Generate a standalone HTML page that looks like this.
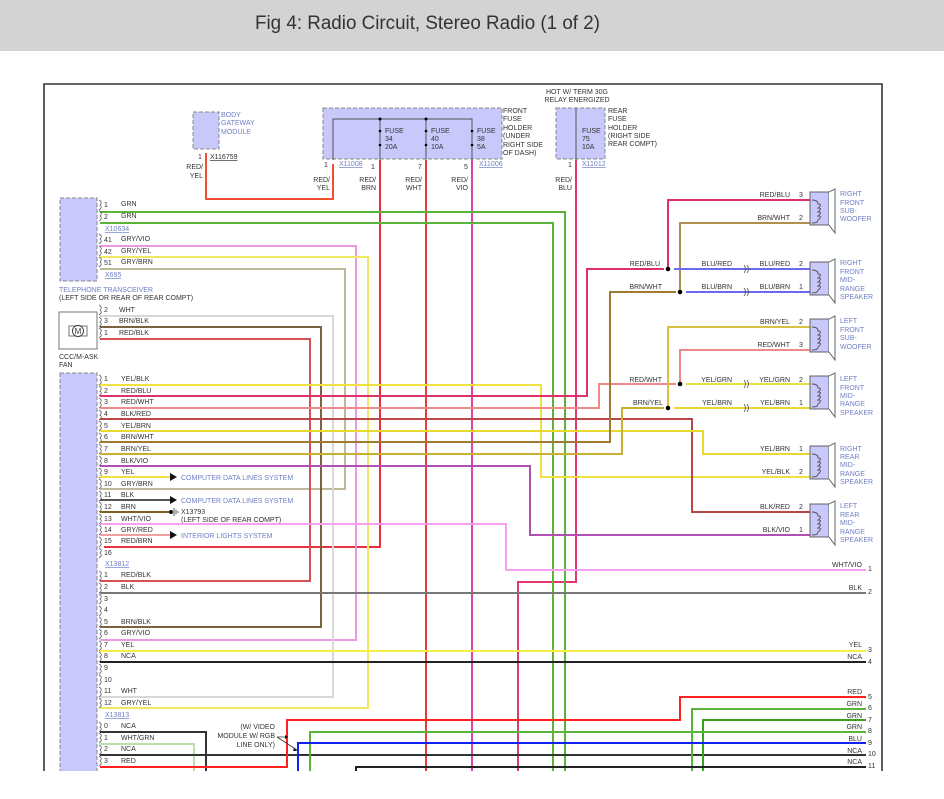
<!DOCTYPE html>
<html><head><meta charset="utf-8"><style>
html,body{margin:0;padding:0;background:#fff;width:944px;height:799px;overflow:hidden}
svg{display:block}
text{font-family:"Liberation Sans",sans-serif;font-size:7px;fill:#333}
.b{fill:#6f7fc4}
.u{fill:#6f7fc4;text-decoration:underline}
.w{fill:none;stroke-width:2}
.c{fill:none;stroke:#666;stroke-width:0.8}
</style></head><body>
<svg width="944" height="799" viewBox="0 0 944 799" xmlns="http://www.w3.org/2000/svg">
<rect x="0" y="0" width="944" height="51" fill="#d3d3d3"/>
<text x="255" y="29" style="font-size:19px;fill:#333" textLength="345" lengthAdjust="spacingAndGlyphs">Fig 4: Radio Circuit, Stereo Radio (1 of 2)</text>
<path d="M44,771 V84 H882 V771" fill="none" stroke="#333" stroke-width="1.6"/>

<!-- Body gateway -->
<rect x="193" y="112" width="26" height="37" fill="#c8c8fa" stroke="#888" stroke-dasharray="4,2"/>
<text class="b" x="221" y="117">BODY</text><text class="b" x="221" y="125">GATEWAY</text><text class="b" x="221" y="134">MODULE</text>
<text x="198" y="159">1</text><text class="u" x="210" y="159" style="fill:#333">X116759</text>
<text x="203" y="169" text-anchor="end">RED/</text><text x="203" y="178" text-anchor="end">YEL</text>
<polyline class="w" stroke="#f05030" points="206,153 206,199 333,199 333,164"/>

<!-- Front fuse holder -->
<rect x="323" y="108" width="179" height="51" fill="#c8c8fa" stroke="#888" stroke-dasharray="4,2"/>
<polyline fill="none" stroke="#555" stroke-width="1" points="333,160 333,119 472,119 472,160"/>
<line x1="380" y1="119" x2="380" y2="160" stroke="#555"/><line x1="426" y1="119" x2="426" y2="160" stroke="#555"/>
<g fill="#000"><circle cx="380" cy="119" r="1.5"/><circle cx="426" cy="119" r="1.5"/><circle cx="380" cy="131" r="1.3"/><circle cx="380" cy="145" r="1.3"/><circle cx="426" cy="131" r="1.3"/><circle cx="426" cy="145" r="1.3"/><circle cx="472" cy="131" r="1.3"/><circle cx="472" cy="145" r="1.3"/><circle cx="576" cy="131" r="1.3"/><circle cx="576" cy="145" r="1.3"/></g>
<text x="385" y="133">FUSE</text><text x="385" y="141">34</text><text x="385" y="149">20A</text>
<text x="431" y="133">FUSE</text><text x="431" y="141">40</text><text x="431" y="149">10A</text>
<text x="477" y="133">FUSE</text><text x="477" y="141">38</text><text x="477" y="149">5A</text>
<text x="503" y="113">FRONT</text><text x="503" y="121">FUSE</text><text x="503" y="130">HOLDER</text><text x="503" y="138">(UNDER</text><text x="503" y="147">RIGHT SIDE</text><text x="503" y="155">OF DASH)</text>
<text x="324" y="167">1</text><text class="u" x="339" y="166">X11008</text>
<text x="371" y="169">1</text><text x="418" y="169">7</text><text x="464" y="169">5</text><text class="u" x="479" y="166">X11006</text>
<text x="330" y="182" text-anchor="end">RED/</text><text x="330" y="190" text-anchor="end">YEL</text>
<text x="376" y="182" text-anchor="end">RED/</text><text x="376" y="190" text-anchor="end">BRN</text>
<text x="422" y="182" text-anchor="end">RED/</text><text x="422" y="190" text-anchor="end">WHT</text>
<text x="468" y="182" text-anchor="end">RED/</text><text x="468" y="190" text-anchor="end">VIO</text>

<!-- Rear fuse holder -->
<text x="577" y="94" text-anchor="middle">HOT W/ TERM 30G</text><text x="577" y="102" text-anchor="middle">RELAY ENERGIZED</text>
<rect x="556" y="108" width="49" height="51" fill="#c8c8fa" stroke="#888" stroke-dasharray="4,2"/>
<line x1="576" y1="108" x2="576" y2="160" stroke="#555"/>
<text x="582" y="133">FUSE</text><text x="582" y="141">75</text><text x="582" y="149">10A</text>
<text x="608" y="113">REAR</text><text x="608" y="121">FUSE</text><text x="608" y="130">HOLDER</text><text x="608" y="138">(RIGHT SIDE</text><text x="608" y="146">REAR COMPT)</text>
<text x="568" y="167">1</text><text class="u" x="582" y="166">X11012</text>
<text x="572" y="182" text-anchor="end">RED/</text><text x="572" y="190" text-anchor="end">BLU</text>

<!-- vertical feeds -->
<polyline class="w" stroke="#e83040" points="380,160 380,547 104,547"/>
<line class="w" stroke="#e83a3a" stroke-width="1.5" x1="426" y1="160" x2="426" y2="771"/>
<line class="w" stroke="#e040b0" x1="472" y1="160" x2="472" y2="771"/>
<polyline class="w" stroke="#e03868" points="576,160 576,582 518,582 518,771"/>

<!-- Telephone transceiver -->
<rect x="60" y="198" width="37" height="83" fill="#c8c8fa" stroke="#888" stroke-dasharray="4,2"/>
<text x="104" y="207">1</text><text x="121" y="206">GRN</text>
<text x="104" y="219">2</text><text x="121" y="218">GRN</text>
<text class="u" x="105" y="231">X10634</text>
<text x="104" y="242">41</text><text x="121" y="241">GRY/VIO</text>
<text x="104" y="254">42</text><text x="121" y="253">GRY/YEL</text>
<text x="104" y="265">51</text><text x="121" y="264">GRY/BRN</text>
<text class="u" x="105" y="277">X695</text>
<text class="b" x="59" y="292">TELEPHONE TRANSCEIVER</text><text x="59" y="300">(LEFT SIDE OR REAR OF REAR COMPT)</text>
<polyline class="w" stroke="#5ab43c" points="100,212 565,212 565,771"/>
<polyline class="w" stroke="#5ab43c" points="100,223 553,223 553,771"/>
<polyline class="w" stroke="#e89ae0" stroke-width="1.6" points="100,246 356,246 356,640 100,640"/>
<polyline class="w" stroke="#f0e860" stroke-width="1.6" points="100,257 368,257 368,708 100,708"/>
<polyline class="w" stroke="#bfb79a" points="100,269 345,269 345,489 100,489"/>

<!-- Fan -->
<rect x="59" y="312" width="38" height="37" fill="#fff" stroke="#777"/>
<rect x="69" y="326" width="18" height="10" fill="none" stroke="#555" stroke-width="0.8"/>
<circle cx="78" cy="331" r="5.5" fill="#fff" stroke="#333" stroke-width="0.9"/>
<text x="78" y="334" text-anchor="middle" style="font-size:8px">M</text>
<text x="59" y="359">CCC/M-ASK</text><text x="59" y="367">FAN</text>
<text x="104" y="312">2</text><text x="119" y="312">WHT</text>
<text x="104" y="323">3</text><text x="119" y="323">BRN/BLK</text>
<text x="104" y="335">1</text><text x="119" y="335">RED/BLK</text>
<polyline class="w" stroke="#d8d8d8" points="100,316 333,316 333,697 100,697"/>
<polyline class="w" stroke="#7a6440" points="100,327 321,327 321,627 100,627"/>
<polyline class="w" stroke="#d85050" points="100,339 310,339 310,581 100,581"/>

<!-- Radio module -->
<rect x="60" y="373" width="37" height="430" fill="#c8c8fa" stroke="#888" stroke-dasharray="4,2"/>
<g>
<text x="104" y="381">1</text><text x="121" y="381">YEL/BLK</text>
<text x="104" y="393">2</text><text x="121" y="393">RED/BLU</text>
<text x="104" y="404">3</text><text x="121" y="404">RED/WHT</text>
<text x="104" y="416">4</text><text x="121" y="416">BLK/RED</text>
<text x="104" y="428">5</text><text x="121" y="428">YEL/BRN</text>
<text x="104" y="439">6</text><text x="121" y="439">BRN/WHT</text>
<text x="104" y="451">7</text><text x="121" y="451">BRN/YEL</text>
<text x="104" y="463">8</text><text x="121" y="463">BLK/VIO</text>
<text x="104" y="474">9</text><text x="121" y="474">YEL</text>
<text x="104" y="486">10</text><text x="121" y="486">GRY/BRN</text>
<text x="104" y="497">11</text><text x="121" y="497">BLK</text>
<text x="104" y="509">12</text><text x="121" y="509">BRN</text>
<text x="104" y="521">13</text><text x="121" y="521">WHT/VIO</text>
<text x="104" y="532">14</text><text x="121" y="532">GRY/RED</text>
<text x="104" y="543">15</text><text x="121" y="543">RED/BRN</text>
<text x="104" y="555">16</text>
<text class="u" x="105" y="566">X13812</text>
<text x="104" y="577">1</text><text x="121" y="577">RED/BLK</text>
<text x="104" y="589">2</text><text x="121" y="589">BLK</text>
<text x="104" y="601">3</text><text x="104" y="612">4</text>
<text x="104" y="624">5</text><text x="121" y="624">BRN/BLK</text>
<text x="104" y="635">6</text><text x="121" y="635">GRY/VIO</text>
<text x="104" y="647">7</text><text x="121" y="647">YEL</text>
<text x="104" y="658">8</text><text x="121" y="658">NCA</text>
<text x="104" y="670">9</text><text x="104" y="682">10</text>
<text x="104" y="693">11</text><text x="121" y="693">WHT</text>
<text x="104" y="705">12</text><text x="121" y="705">GRY/YEL</text>
<text class="u" x="105" y="717">X13813</text>
<text x="104" y="728">0</text><text x="121" y="728">NCA</text>
<text x="104" y="740">1</text><text x="121" y="740">WHT/GRN</text>
<text x="104" y="751">2</text><text x="121" y="751">NCA</text>
<text x="104" y="763">3</text><text x="121" y="763">RED</text>
</g>
<!-- connector marks -->
<g class="c">
<path d="M99,200 q4,2 1,5 q3,2 -1,5 M99,211 q4,2 1,5 q3,2 -1,5 M99,234 q4,2 1,5 q3,2 -1,5 M99,246 q4,2 1,5 q3,2 -1,5 M99,257 q4,2 1,5 q3,2 -1,5 M99,305 q4,2 1,5 q3,2 -1,5 M99,317 q4,2 1,5 q3,2 -1,5 M99,328 q4,2 1,5 q3,2 -1,5"/>
<path d="M99,375 q4,2 1,5 q3,2 -1,5 M99,386 q4,2 1,5 q3,2 -1,5 M99,398 q4,2 1,5 q3,2 -1,5 M99,410 q4,2 1,5 q3,2 -1,5 M99,421 q4,2 1,5 q3,2 -1,5 M99,433 q4,2 1,5 q3,2 -1,5 M99,444 q4,2 1,5 q3,2 -1,5 M99,456 q4,2 1,5 q3,2 -1,5 M99,468 q4,2 1,5 q3,2 -1,5 M99,479 q4,2 1,5 q3,2 -1,5 M99,491 q4,2 1,5 q3,2 -1,5 M99,502 q4,2 1,5 q3,2 -1,5 M99,514 q4,2 1,5 q3,2 -1,5 M99,525 q4,2 1,5 q3,2 -1,5 M99,537 q4,2 1,5 q3,2 -1,5 M99,548 q4,2 1,5 q3,2 -1,5"/>
<path d="M99,571 q4,2 1,5 q3,2 -1,5 M99,583 q4,2 1,5 q3,2 -1,5 M99,594 q4,2 1,5 q3,2 -1,5 M99,606 q4,2 1,5 q3,2 -1,5 M99,617 q4,2 1,5 q3,2 -1,5 M99,629 q4,2 1,5 q3,2 -1,5 M99,641 q4,2 1,5 q3,2 -1,5 M99,652 q4,2 1,5 q3,2 -1,5 M99,664 q4,2 1,5 q3,2 -1,5 M99,675 q4,2 1,5 q3,2 -1,5 M99,687 q4,2 1,5 q3,2 -1,5 M99,698 q4,2 1,5 q3,2 -1,5 M99,722 q4,2 1,5 q3,2 -1,5 M99,733 q4,2 1,5 q3,2 -1,5 M99,745 q4,2 1,5 q3,2 -1,5 M99,756 q4,2 1,5 q3,2 -1,5"/>
</g>

<!-- first list wires -->
<polyline class="w" stroke="#f0e040" points="100,385 541,385 541,477 810,477"/>
<polyline class="w" stroke="#e0306a" points="100,396 587,396 587,269 664,269"/>
<polyline class="w" stroke="#f08a88" points="100,408 599,408 599,384 676,384"/>
<polyline class="w" stroke="#b84848" points="100,419 692,419 692,512 810,512"/>
<polyline class="w" stroke="#e8d830" points="100,431 703,431 703,454 810,454"/>
<polyline class="w" stroke="#a07a30" points="100,442 610,442 610,292 676,292"/>
<polyline class="w" stroke="#c8b030" points="100,454 622,454 622,408 664,408"/>
<polyline class="w" stroke="#b050b0" points="100,466 530,466 530,535 810,535"/>
<line class="w" stroke="#f0e040" x1="100" y1="477" x2="172" y2="477"/>
<path d="M170,473 l7,4 l-7,4z" fill="#111"/><text class="b" x="181" y="480">COMPUTER DATA LINES SYSTEM</text>
<line class="w" stroke="#555" x1="100" y1="500" x2="172" y2="500"/>
<path d="M170,496 l7,4 l-7,4z" fill="#111"/><text class="b" x="181" y="503">COMPUTER DATA LINES SYSTEM</text>
<line class="w" stroke="#806020" x1="100" y1="512" x2="170" y2="512"/>
<circle cx="171" cy="512" r="2" fill="#111"/><path d="M174,508 v8 M176,509.5 v5 M178,511 v2" stroke="#333" stroke-width="0.8"/>
<text x="181" y="514">X13793</text><text x="181" y="522">(LEFT SIDE OF REAR COMPT)</text>
<polyline class="w" stroke="#f8a0f0" points="100,524 506,524 506,570 866,570"/>
<line class="w" stroke="#f0a0a0" x1="100" y1="535" x2="172" y2="535"/>
<path d="M170,531 l7,4 l-7,4z" fill="#111"/><text class="b" x="181" y="538">INTERIOR LIGHTS SYSTEM</text>

<!-- second list wires -->
<line class="w" stroke="#777" x1="100" y1="593" x2="866" y2="593"/>
<line class="w" stroke="#f8f040" stroke-width="2.5" x1="100" y1="651" x2="866" y2="651"/>
<line class="w" stroke="#222" x1="100" y1="662" x2="866" y2="662"/>
<polyline class="w" stroke="#333" points="100,732 206,732 206,771"/>
<polyline class="w" stroke="#b8e0a8" points="100,744 194,744 194,771"/>
<line class="w" stroke="#333" x1="100" y1="755" x2="866" y2="755"/>
<polyline class="w" stroke="#ff2020" points="100,767 287,767 287,720 680,720 680,697 866,697"/>
<polyline class="w" stroke="#5ab43c" points="692,771 692,709 866,709"/>
<polyline class="w" stroke="#3aa020" points="703,771 703,720 866,720"/>
<polyline class="w" stroke="#5ab43c" points="310,771 310,732 866,732"/>
<polyline class="w" stroke="#1020f0" points="298,771 298,743 866,743"/>
<polyline class="w" stroke="#222" points="356,771 356,767 866,767"/>
<text x="275" y="729" text-anchor="end">(W/ VIDEO</text><text x="275" y="738" text-anchor="end">MODULE W/ RGB</text><text x="275" y="747" text-anchor="end">LINE ONLY)</text>
<path d="M277,737 l20,13 M277,737 l8,0" stroke="#333" stroke-width="0.8" fill="none"/>
<path d="M285,735 l3,2 l-3,2z M294,748 l3,3 l-4,0z" fill="#111"/>

<!-- right labels -->
<g text-anchor="end">
<text x="862" y="567">WHT/VIO</text><text x="862" y="590">BLK</text><text x="862" y="647">YEL</text><text x="862" y="659">NCA</text>
<text x="862" y="694">RED</text><text x="862" y="706">GRN</text><text x="862" y="718">GRN</text><text x="862" y="729">GRN</text><text x="862" y="741">BLU</text><text x="862" y="753">NCA</text><text x="862" y="764">NCA</text>
</g>
<g>
<text x="868" y="571">1</text><text x="868" y="594">2</text><text x="868" y="652">3</text><text x="868" y="664">4</text><text x="868" y="699">5</text><text x="868" y="710">6</text><text x="868" y="722">7</text><text x="868" y="733">8</text><text x="868" y="745">9</text><text x="868" y="756">10</text><text x="868" y="768">11</text>
</g>

<!-- speaker wires -->
<polyline class="w" stroke="#e0306a" points="668,269 668,200 810,200"/>
<polyline class="w" stroke="#b09050" points="680,292 680,223 810,223"/>
<line class="w" stroke="#6a6af0" x1="674" y1="269" x2="810" y2="269"/>
<line class="w" stroke="#6a6af0" x1="686" y1="292" x2="810" y2="292"/>
<polyline class="w" stroke="#d8c040" points="668,408 668,327 810,327"/>
<polyline class="w" stroke="#f08a88" points="680,384 680,350 810,350"/>
<line class="w" stroke="#e8e040" x1="686" y1="384" x2="810" y2="384"/>
<line class="w" stroke="#e8d830" x1="674" y1="408" x2="810" y2="408"/>
<g fill="#000"><circle cx="668" cy="269" r="2.3"/><circle cx="680" cy="292" r="2.3"/><circle cx="680" cy="384" r="2.3"/><circle cx="668" cy="408" r="2.3"/></g>
<g fill="none" stroke="#555" stroke-width="0.8">
<path d="M744,265 q3,4 0,8 M747,265 q3,4 0,8 M744,288 q3,4 0,8 M747,288 q3,4 0,8 M744,380 q3,4 0,8 M747,380 q3,4 0,8 M744,404 q3,4 0,8 M747,404 q3,4 0,8"/>
</g>
<g text-anchor="end">
<text x="790" y="197">RED/BLU</text><text x="790" y="220">BRN/WHT</text>
<text x="660" y="266">RED/BLU</text><text x="732" y="266">BLU/RED</text><text x="790" y="266">BLU/RED</text>
<text x="662" y="289">BRN/WHT</text><text x="732" y="289">BLU/BRN</text><text x="790" y="289">BLU/BRN</text>
<text x="790" y="324">BRN/YEL</text><text x="790" y="347">RED/WHT</text>
<text x="662" y="382">RED/WHT</text><text x="732" y="382">YEL/GRN</text><text x="790" y="382">YEL/GRN</text>
<text x="663" y="405">BRN/YEL</text><text x="732" y="405">YEL/BRN</text><text x="790" y="405">YEL/BRN</text>
<text x="790" y="451">YEL/BRN</text><text x="790" y="474">YEL/BLK</text>
<text x="790" y="509">BLK/RED</text><text x="790" y="532">BLK/VIO</text>
</g>
<g>
<text x="799" y="197">3</text><text x="799" y="220">2</text><text x="799" y="266">2</text><text x="799" y="289">1</text>
<text x="799" y="324">2</text><text x="799" y="347">3</text><text x="799" y="382">2</text><text x="799" y="405">1</text>
<text x="799" y="451">1</text><text x="799" y="474">2</text><text x="799" y="509">2</text><text x="799" y="532">1</text>
</g>
<!-- speakers -->
<g id="spk">
<g stroke="#555" stroke-width="0.9">
<rect x="810" y="192" width="19" height="33" fill="#c8c8fa"/><path d="M829,192 L835,189 V233 L829,225" fill="#fff"/>
<path d="M812,200 q6,0 6,4 q5,0 0,4 q5,0 0,4 q5,0 0,4 q5,0 0,4 q0,3 -6,3" fill="none"/>
</g>
</g>
<use href="#spk" y="70"/><use href="#spk" y="127"/><use href="#spk" y="184"/><use href="#spk" y="254"/><use href="#spk" y="312"/>
<g class="b">
<text class="b" x="840" y="196">RIGHT</text><text class="b" x="840" y="205">FRONT</text><text class="b" x="840" y="213">SUB-</text><text class="b" x="840" y="221">WOOFER</text>
<text class="b" x="840" y="265">RIGHT</text><text class="b" x="840" y="274">FRONT</text><text class="b" x="840" y="282">MID-</text><text class="b" x="840" y="291">RANGE</text><text class="b" x="840" y="299">SPEAKER</text>
<text class="b" x="840" y="323">LEFT</text><text class="b" x="840" y="332">FRONT</text><text class="b" x="840" y="340">SUB-</text><text class="b" x="840" y="349">WOOFER</text>
<text class="b" x="840" y="381">LEFT</text><text class="b" x="840" y="390">FRONT</text><text class="b" x="840" y="398">MID-</text><text class="b" x="840" y="406">RANGE</text><text class="b" x="840" y="415">SPEAKER</text>
<text class="b" x="840" y="451">RIGHT</text><text class="b" x="840" y="459">REAR</text><text class="b" x="840" y="467">MID-</text><text class="b" x="840" y="476">RANGE</text><text class="b" x="840" y="484">SPEAKER</text>
<text class="b" x="840" y="508">LEFT</text><text class="b" x="840" y="517">REAR</text><text class="b" x="840" y="525">MID-</text><text class="b" x="840" y="534">RANGE</text><text class="b" x="840" y="542">SPEAKER</text>
</g>
<rect x="0" y="771" width="944" height="28" fill="#fff"/>
</svg>
</body></html>
